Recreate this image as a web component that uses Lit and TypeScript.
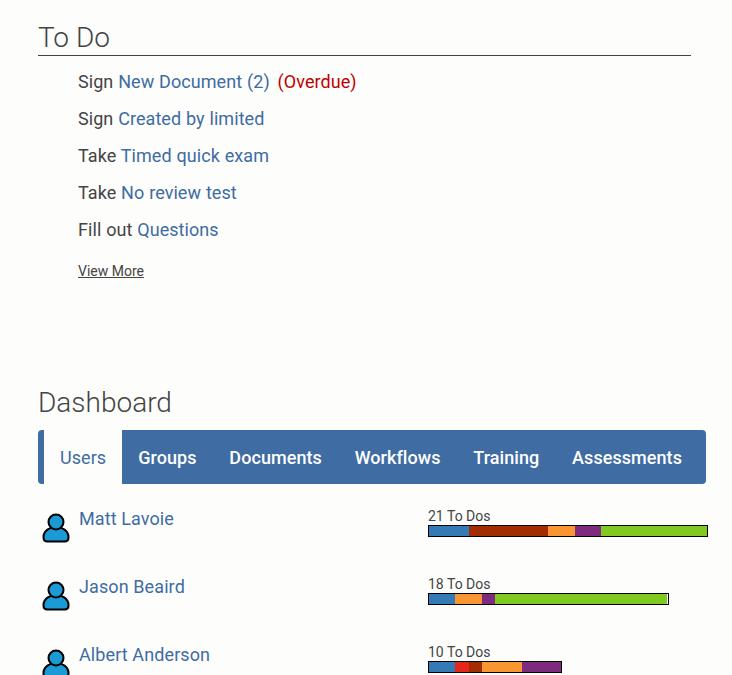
import { LitElement, html, css } from "lit";
import { customElement } from "lit/decorators.js";

const COL: Record<string, string> = { b: "#337ab7", d: "#a32c00", r: "#e5261b", o: "#f99632", p: "#7d2a7f", g: "#80c921" };
const UNIT = 13.24;
const users: { name: string; n: number; w: number; segs: [string, number][] }[] = [
  { name: "Matt Lavoie", n: 21, w: 278, segs: [["b", 3], ["d", 6], ["o", 2], ["p", 2], ["g", 8]] },
  { name: "Jason Beaird", n: 18, w: 239, segs: [["b", 2], ["o", 2], ["p", 1], ["g", 13]] },
  { name: "Albert Anderson", n: 10, w: 132, segs: [["b", 2], ["r", 1], ["d", 1], ["o", 3], ["p", 3]] },
];
const todos: [string, string, boolean][] = [
  ["Sign", "New Document (2)", true],
  ["Sign", "Created by limited", false],
  ["Take", "Timed quick exam", false],
  ["Take", "No review test", false],
  ["Fill out", "Questions", false],
];
const tabs = ["Users", "Groups", "Documents", "Workflows", "Training", "Assessments"];

@customElement("app-root")
export class AppRoot extends LitElement {
  static styles = css`
    :host { display: block; height: 675px; overflow: hidden; background: #fdfdfc; color: #444; font-family: Roboto, sans-serif; }
    .page { padding: 20px 26px 0 38px; }
    h2 { margin: 0; font-weight: 300; font-size: 28px; line-height: 35px; color: #444; }
    .todo-head { border-bottom: 1px solid #444; width: 653px; }
    ul { list-style: none; margin: 0; padding: 7px 0 0 40px; }
    li { font-size: 18px; line-height: 37px; height: 37px; white-space: nowrap; letter-spacing: 0.06px; word-spacing: 0.3px; }
    a { color: #3e6ca3; text-decoration: none; }
    .over { color: #c00000; margin-left: 3px; }
    .more { display: block; margin: 15px 0 0 40px; font-size: 14px; line-height: 16px; color: #444; text-decoration: underline; width: max-content; }
    .dash { margin-top: 106px; }
    .tabs { display: flex; margin-top: 10px; height: 54px; width: 668px; box-sizing: border-box; background: #3e6ca3; border-radius: 4px; padding-left: 6px; }
    .tab { display: flex; align-items: center; padding: 0 16.4px; font-size: 18px; font-weight: 500; color: #fff; letter-spacing: 0.06px; }
    .tab.on { background: #fdfdfc; color: #3e6ca3; font-weight: 400; padding: 0 16px; margin-right: -0.4px; }
    .rows { margin-top: 21px; }
    .row { display: grid; grid-template-columns: 28px 1fr 280px; height: 68px; width: 670px; }
    .icon { display: block; margin: 8px 0 0 4px; }
    .name { font-size: 18px; line-height: 26px; margin-left: 13px; margin-top: 1px; letter-spacing: 0.1px; }
    .info { margin-top: 3px; }
    .count { font-size: 14px; line-height: 16px; color: #444; }
    .bar { display: flex; height: 10px; border: 1px solid #000; margin-top: 1px; background: #fff; }
    .seg { height: 100%; flex: none; }
  `;

  render() {
    return html`<div class="page">
      <section>
        <div class="todo-head"><h2>To Do</h2></div>
        <ul>
          ${todos.map(([verb, title, over]) => html`<li>${verb} <a>${title}</a>${over ? html` <span class="over">(Overdue)</span>` : ""}</li>`)}
        </ul>
        <a class="more">View More</a>
      </section>
      <section class="dash">
        <h2>Dashboard</h2>
        <div class="tabs">
          ${tabs.map((t, i) => html`<div class="tab ${i === 0 ? "on" : ""}">${t}</div>`)}
        </div>
        <div class="rows">
          ${users.map((u) => html`<div class="row">
            <svg class="icon" width="28" height="30" viewBox="0 0 28 30">
              <path d="M1.500 24C1.500 17.500 8 14 14 14s12.500 3.500 12.500 10v.5c0 2.500-1.500 4-4 4h-17c-2.500 0-4-1.500-4-4z" fill="#1b9ad6" stroke="#000" stroke-width="2" stroke-linejoin="round"/>
              <circle cx="14" cy="9" r="7.500" fill="#1b9ad6" stroke="#000" stroke-width="2"/>
            </svg>
            <a class="name">${u.name}</a>
            <div class="info">
              <div class="count">${u.n} To Dos</div>
              <div class="bar" style="width:${u.w}px">
                ${u.segs.map(([c, k]) => html`<div class="seg" style="width:${k * UNIT}px;background:${COL[c]}"></div>`)}
              </div>
            </div>
          </div>`)}
        </div>
      </section>
    </div>`;
  }
}
